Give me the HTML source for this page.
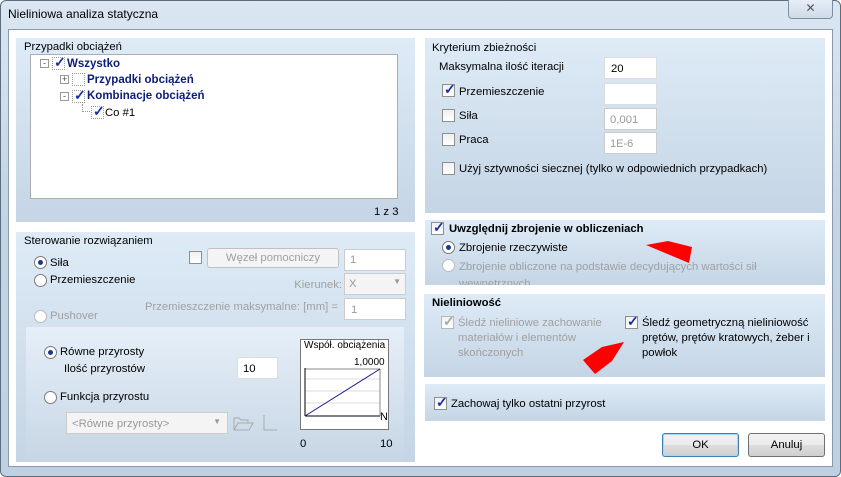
<!DOCTYPE html>
<html><head><meta charset="utf-8"><style>
*{margin:0;padding:0;box-sizing:border-box}
body{width:841px;height:477px;overflow:hidden;background:#fff;font-family:"Liberation Sans",Arial,sans-serif;font-size:11.3px;color:#000;position:relative}
.a{position:absolute;white-space:nowrap}
.t{margin-top:1px}
.frame{position:absolute;left:0;top:0;width:841px;height:477px;border:1px solid #5d6d80;border-radius:6px;background:linear-gradient(#dbe6f2,#c5d5e6 40%,#bfd0e2)}
.client{position:absolute;left:8px;top:29px;width:825px;height:438px;background:#fff;border:1px solid #8a99ab}
.pn{position:absolute;background:linear-gradient(#deebf7,#c5d5e5)}
.box{position:absolute;background:#fff;border:1px solid #abadb3}
.dis{color:#a0a0a0}
.cb{position:absolute;width:13px;height:13px;border:1px solid #8e8f8f;background:linear-gradient(#f0f0f0,#fff)}
.cb.c::after{content:"✓";position:absolute;left:1px;top:-4px;font-size:14px;font-weight:bold;color:#1d2fa0}
.cb.d{border-color:#b8b8b8}.cb.d::after{color:#a8a8a8}
.rb{position:absolute;width:13px;height:13px;border:1px solid #7a7a7a;border-radius:50%;background:#fff}
.rb.c::after{content:"";position:absolute;left:3px;top:3px;width:5px;height:5px;border-radius:50%;background:#1d3a8a}
.rb.d{border-color:#bbb}
.btn{position:absolute;border:1px solid #707070;border-radius:3px;background:linear-gradient(#f2f2f2,#ebebeb 50%,#dddddd 51%,#cfcfcf);text-align:center;line-height:22px}
.b{font-weight:bold}
.tv{color:#0c1d7a;font-weight:bold;font-size:11.5px}
</style></head><body>
<div class="frame"></div>
<div class="a" style="left:8px;top:7px;font-size:12px">Nieliniowa analiza statyczna</div>
<div class="a" style="left:788px;top:0;width:45px;height:19px;border:1px solid #7d8ea3;border-top:none;border-radius:0 0 4px 4px;background:linear-gradient(#e6eef7,#cfdbe8);text-align:center;color:#555;font-size:12px;line-height:17px">✕</div>
<div class="client"></div>

<!-- left top -->
<div class="pn" style="left:16px;top:38px;width:399px;height:184px"></div>
<div class="a t" style="left:24px;top:40px">Przypadki obciążeń</div>
<div class="box" style="left:30px;top:54px;width:368px;height:145px"></div>
<div class="a" style="left:40px;top:59px;width:9px;height:9px;border:1px solid #999;font-size:9px;line-height:6px;text-align:center;color:#444">-</div>
<div class="cb c" style="left:52px;top:57px;border:1px dotted #999;background:#fff"></div>
<div class="a tv t" style="left:67px;top:57px">Wszystko</div>
<div class="a" style="left:60px;top:75px;width:9px;height:9px;border:1px solid #999;font-size:9px;line-height:7px;text-align:center;color:#444">+</div>
<div class="cb" style="left:72px;top:73px;border:1px dotted #999;background:#fff"></div>
<div class="a tv t" style="left:87px;top:73px">Przypadki obciążeń</div>
<div class="a" style="left:60px;top:92px;width:9px;height:9px;border:1px solid #999;font-size:9px;line-height:6px;text-align:center;color:#444">-</div>
<div class="cb c" style="left:72px;top:90px;border:1px dotted #999;background:#fff"></div>
<div class="a tv t" style="left:87px;top:89px">Kombinacje obciążeń</div>
<div class="a" style="left:82px;top:104px;width:8px;height:8px;border-left:1px dotted #999;border-bottom:1px dotted #999"></div>
<div class="cb c" style="left:91px;top:106px;border:1px dotted #999;background:#fff"></div>
<div class="a t" style="left:105px;top:106px">Co #1</div>
<div class="a t" style="left:374px;top:205px">1 z 3</div>

<!-- left bottom -->
<div class="pn" style="left:16px;top:232px;width:399px;height:230px"></div>
<div class="a t" style="left:24px;top:234px">Sterowanie rozwiązaniem</div>
<div class="rb c" style="left:34px;top:256px"></div><div class="a t" style="left:50px;top:256px">Siła</div>
<div class="rb" style="left:34px;top:274px"></div><div class="a t" style="left:50px;top:273px">Przemieszczenie</div>
<div class="rb d" style="left:34px;top:310px"></div><div class="a dis t" style="left:50px;top:309px">Pushover</div>
<div class="cb" style="left:189px;top:251px"></div>
<div class="a" style="left:207px;top:248px;width:132px;height:20px;border:1px solid #c0c0c0;border-radius:3px;background:#f4f4f4;color:#a0a0a0;text-align:center;line-height:18px">Węzeł pomocniczy</div>
<div class="box" style="left:344px;top:249px;width:62px;height:22px;border-color:#ccc;padding:4px 5px;color:#999">1</div>
<div class="a dis t" style="right:499px;top:278px">Kierunek:</div>
<div class="box" style="left:344px;top:273px;width:62px;height:22px;border-color:#ccc;background:#f4f4f4;padding:4px 4px;color:#999">X<span style="position:absolute;right:4px;top:3px;font-size:8px">▼</span></div>
<div class="a dis t" style="right:503px;top:300px">Przemieszczenie maksymalne: [mm] =</div>
<div class="box" style="left:344px;top:298px;width:62px;height:22px;border-color:#ccc;padding:5px 6px;color:#999">1</div>
<div class="pn" style="left:26px;top:327px;width:378px;height:134px;background:linear-gradient(#e6eff8,#c7d6e5)"></div>
<div class="rb c" style="left:44px;top:346px"></div><div class="a t" style="left:60px;top:345px">Równe przyrosty</div>
<div class="a t" style="left:64px;top:362px">Ilość przyrostów</div>
<div class="box" style="left:237px;top:357px;width:41px;height:22px;border-color:#ddd;padding:5px 5px">10</div>
<div class="rb" style="left:44px;top:391px"></div><div class="a t" style="left:60px;top:390px">Funkcja przyrostu</div>
<div class="box" style="left:66px;top:412px;width:162px;height:22px;border-color:#ccc;background:#f4f4f4;padding:5px 5px;color:#999">&lt;Równe przyrosty&gt;<span style="position:absolute;right:6px;top:4px;font-size:8px">▼</span></div>
<svg class="a" style="left:231px;top:413px" width="46" height="20"><path d="M3 17 L3 5 L8 5 L10 7 L17 7 L17 10 M3 17 L7 10 L22 10 L18 17 Z" fill="none" stroke="#aaa"/><path d="M33 2 V17 H46" fill="none" stroke="#aaa"/></svg>
<div class="a" style="left:300px;top:339px;width:89px;height:91px;border:1px solid #777;background:#fff"></div>
<div class="a" style="left:304px;top:340px;font-size:10px">Współ. obciążenia</div>
<div class="a" style="left:354px;top:357px;font-size:10px">1,0000</div>
<svg class="a" style="left:304px;top:368px" width="84" height="60"><g stroke="#ddd"><line x1="1" y1="11" x2="76" y2="11"/><line x1="1" y1="23" x2="76" y2="23"/><line x1="1" y1="35" x2="76" y2="35"/></g><line x1="1" y1="1" x2="76" y2="1" stroke="#888"/><line x1="1" y1="0" x2="1" y2="48" stroke="#000"/><line x1="1" y1="48" x2="76" y2="48" stroke="#000"/><line x1="76" y1="1" x2="76" y2="48" stroke="#888"/><line x1="1" y1="48" x2="76" y2="1" stroke="#1a1a8a"/></svg>
<div class="a" style="left:380px;top:411px;font-size:11px">N</div>
<div class="a t" style="left:300px;top:437px">0</div>
<div class="a t" style="left:380px;top:437px">10</div>

<!-- right top -->
<div class="pn" style="left:425px;top:38px;width:400px;height:175px"></div>
<div class="a t" style="left:432px;top:41px">Kryterium zbieżności</div>
<div class="a t" style="left:439px;top:60px">Maksymalna ilość iteracji</div>
<div class="box" style="left:604px;top:57px;width:53px;height:22px;border-color:#ddd;padding:5px 6px">20</div>
<div class="cb c" style="left:442px;top:84px"></div><div class="a t" style="left:459px;top:85px">Przemieszczenie</div>
<div class="box" style="left:604px;top:83px;width:53px;height:22px;border-color:#ddd"></div>
<div class="cb" style="left:442px;top:109px"></div><div class="a t" style="left:459px;top:109px">Siła</div>
<div class="box" style="left:604px;top:108px;width:53px;height:22px;border-color:#ccc;padding:5px 5px;color:#999">0,001</div>
<div class="cb" style="left:442px;top:133px"></div><div class="a t" style="left:459px;top:133px">Praca</div>
<div class="box" style="left:604px;top:132px;width:53px;height:22px;border-color:#ccc;padding:5px 5px;color:#999;font-size:11px">1E-6</div>
<div class="cb" style="left:442px;top:162px"></div><div class="a t" style="left:459px;top:162px">Użyj sztywności siecznej (tylko w odpowiednich przypadkach)</div>

<!-- right 2 -->
<div class="pn" style="left:425px;top:220px;width:400px;height:65px;overflow:hidden">
<div class="cb c" style="left:6px;top:2px"></div><div class="a b t" style="left:24px;top:2px">Uwzględnij zbrojenie w obliczeniach</div>
<div class="rb c" style="left:17px;top:21px"></div><div class="a t" style="left:34px;top:21px">Zbrojenie rzeczywiste</div>
<div class="rb d" style="left:17px;top:39px"></div><div class="a dis t" style="left:34px;top:38px;line-height:17px">Zbrojenie obliczone na podstawie decydujących wartości sił<br>wewnętrznych</div>
</div>

<!-- right 3 -->
<div class="pn" style="left:424px;top:294px;width:401px;height:83px"></div>
<div class="a b t" style="left:432px;top:296px">Nieliniowość</div>
<div class="cb c d" style="left:441px;top:316px"></div>
<div class="a dis t" style="left:458px;top:315px;line-height:15px">Śledź nieliniowe zachowanie<br>materiałów i elementów<br>skończonych</div>
<div class="cb c" style="left:625px;top:316px"></div>
<div class="a t" style="left:642px;top:315px;line-height:15px">Śledź geometryczną nieliniowość<br>prętów, prętów kratowych, żeber i<br>powłok</div>

<!-- right 4 -->
<div class="pn" style="left:425px;top:384px;width:400px;height:37px"></div>
<div class="cb c" style="left:434px;top:397px"></div><div class="a t" style="left:451px;top:397px">Zachowaj tylko ostatni przyrost</div>

<div class="btn" style="left:662px;top:433px;width:77px;height:24px;border-color:#3c7fb1;box-shadow:inset 0 0 0 1px #9fdbf8">OK</div>
<div class="btn" style="left:748px;top:433px;width:77px;height:24px">Anuluj</div>

<svg class="a" style="left:0;top:0" width="841" height="477"><polygon points="646,245 668,241 692,247 689,263" fill="#f00"/><polygon points="583,360 602,347 624,342 612,361 595,374" fill="#f00"/></svg>
</body></html>
